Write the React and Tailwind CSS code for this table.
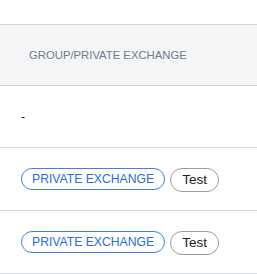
import React from 'react';

const rows = [
    { type: 'dash' },
    { type: 'tags', tags: ['PRIVATE EXCHANGE', 'Test'] },
    { type: 'tags', tags: ['PRIVATE EXCHANGE', 'Test'] },
];

export default function App() {
    return (
        <div className="w-[257px] h-[274px] bg-white font-['Liberation_Sans',Arial,sans-serif] overflow-hidden">
            <div className="h-[24px]" />
            {/* Header */}
            <div className="h-[62px] bg-[#f4f5f7] border-y border-[#cdd8e4] flex items-center pl-[29px]">
                <span className="text-[11.3px] text-[#6f7a8d]">GROUP/PRIVATE EXCHANGE</span>
            </div>

            {/* Body */}
            {rows.map((row, i) => (
                <div
                    key={i}
                    className={`${i === 0 ? 'h-[62px]' : 'h-[63px]'} border-b border-[#cdd8e4] flex items-center pl-[21px]`}
                >
                    {row.type === 'dash' ? (
                        <span className="text-[12px] text-[#111]">-</span>
                    ) : (
                        <div className="flex items-center gap-[5px]">
                            <span className="h-[22px] px-[10px] rounded-full border border-[#3a82e8] text-[#2a6ce0] text-[12.2px] flex items-center">
                                {row.tags[0]}
                            </span>
                            <span className="h-[24px] mt-[2px] px-[11px] rounded-full border border-[#9c9c9c] text-[#222] text-[13.5px] flex items-center">
                                {row.tags[1]}
                            </span>
                        </div>
                    )}
                </div>
            ))}
        </div>
    );
}
